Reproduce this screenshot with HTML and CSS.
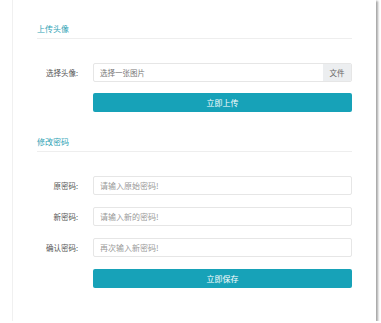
FILE: index.html
```html
<!DOCTYPE html>
<html lang="zh-CN">
<head>
  <meta charset="UTF-8">
  <title>个人设置</title>
  <link rel="stylesheet" href="styles.css">
</head>
<body>
  <div class="card">
    <!-- 上传头像 -->
    <div class="section-title">上传头像</div>
    <div class="form avatar-form">
      <div class="form-row">
        <label class="form-label">选择头像:</label>
        <div class="file-input">
          <span class="file-name">选择一张图片</span>
          <span class="file-btn">文件</span>
        </div>
      </div>
      <div class="form-row">
        <span class="form-label"></span>
        <button class="btn">立即上传</button>
      </div>
    </div>

    <!-- 修改密码 -->
    <div class="section-title">修改密码</div>
    <div class="form">
      <div class="form-row">
        <label class="form-label">原密码:</label>
        <input class="text-input" type="password" placeholder="请输入原始密码!">
      </div>
      <div class="form-row">
        <label class="form-label">新密码:</label>
        <input class="text-input" type="password" placeholder="请输入新的密码!">
      </div>
      <div class="form-row">
        <label class="form-label">确认密码:</label>
        <input class="text-input" type="password" placeholder="再次输入新密码!">
      </div>
      <div class="form-row">
        <span class="form-label"></span>
        <button class="btn">立即保存</button>
      </div>
    </div>
  </div>
</body>
</html>
```

FILE: styles.css
```css
body {
  margin: 0;
  background: #fff;
  font-family: "Noto Sans CJK SC", "Noto Sans", sans-serif;
}

.card {
  box-sizing: border-box;
  width: 364px;
  height: 321px;
  margin-left: 12px;
  padding: 23px 24px 0 24px;
  background: #fff;
  border-left: 1px solid #f0f0f0;
  box-shadow: 2px 1px 2px rgba(0, 0, 0, 0.35);
}

.section-title {
  font-size: 8px;
  line-height: 12px;
  color: #2fa3b5;
  padding-bottom: 3px;
  border-bottom: 1px solid #eeeeee;
}

.form {
  display: flex;
  flex-direction: column;
  gap: 12px;
  padding: 24px 0;
}

.avatar-form {
  gap: 11px;
}

.form-row {
  display: flex;
  align-items: center;
}

.form-label {
  flex: 0 0 56px;
  box-sizing: border-box;
  padding-right: 15px;
  text-align: right;
  font-size: 7.5px;
  color: #555;
}

.file-input,
.text-input {
  flex: 1;
  box-sizing: border-box;
  height: 19px;
  border: 1px solid #e6e6e6;
  border-radius: 2px;
  background: #fff;
}

.file-input {
  display: flex;
  align-items: stretch;
  overflow: hidden;
}

.file-name {
  flex: 1;
  padding-left: 6px;
  font-size: 7.5px;
  line-height: 17px;
  color: #777;
}

.file-btn {
  width: 28px;
  background: #eceef0;
  font-size: 7.5px;
  line-height: 17px;
  text-align: center;
  color: #666;
}

.text-input {
  padding: 0 6px;
  font-family: inherit;
  font-size: 8px;
  outline: none;
}

.text-input::placeholder {
  color: #999;
}

.btn {
  flex: 1;
  height: 19px;
  border: none;
  border-radius: 2px;
  background: #17a2b8;
  color: #fff;
  font-family: inherit;
  font-size: 8px;
  cursor: pointer;
}
```
